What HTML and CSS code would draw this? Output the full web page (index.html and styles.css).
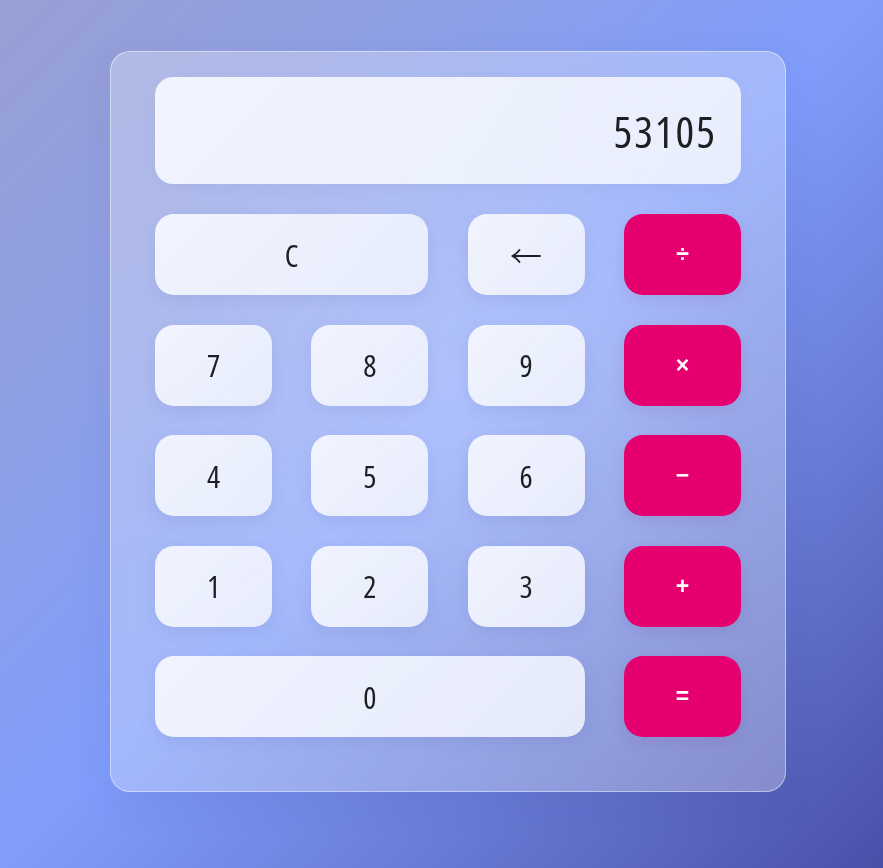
FILE: index.html
```html
<!DOCTYPE html>
<html lang="en">
<head>
<meta charset="utf-8">
<title>Calculator</title>
<link rel="stylesheet" href="styles.css">
</head>
<body>
<main class="calc">
  <div class="display">53105</div>
  <div class="keys">
    <button class="key span2">C</button>
    <button class="key arrow" aria-label="Backspace">
      <svg class="arrow-icon" width="30" height="14" viewBox="0 0 30 14" fill="none" stroke="#1f1f23" stroke-width="1.8" stroke-linecap="round" stroke-linejoin="round">
        <path d="M1.5 7 H29"/>
        <path d="M8.5 1 Q5.5 5 1.5 7 Q5.5 9 8.5 13"/>
      </svg>
    </button>
    <button class="key op">÷</button>
    <button class="key">7</button>
    <button class="key">8</button>
    <button class="key">9</button>
    <button class="key op">×</button>
    <button class="key">4</button>
    <button class="key">5</button>
    <button class="key">6</button>
    <button class="key op">−</button>
    <button class="key">1</button>
    <button class="key">2</button>
    <button class="key">3</button>
    <button class="key op">+</button>
    <button class="key span3">0</button>
    <button class="key op">=</button>
  </div>
</main>
</body>
</html>
```

FILE: styles.css
```css
* { box-sizing: border-box; }

html, body { height: 100%; }

body {
  margin: 0;
  padding: 51px 0 0 110px;
  background: linear-gradient(135deg, #989fd3 0%, #8fa0e6 25%, #809dfc 50%, #6a7ed8 72%, #4a4fa8 100%);
  font-family: "Open Sans", "DejaVu Sans Condensed", sans-serif;
  font-stretch: 75%;
  overflow: hidden;
}

.calc {
  width: 676px;
  padding: 25px 44px 54px 44px;
  border-radius: 20px;
  border: 1px solid rgba(255, 255, 255, 0.45);
  background:
    radial-gradient(circle at 50% 45%, rgba(255, 255, 255, 0.12) 0%, rgba(255, 255, 255, 0) 60%),
    rgba(255, 255, 255, 0.28);
  backdrop-filter: blur(12px);
  box-shadow: 0 10px 40px rgba(40, 40, 120, 0.08);
}

.display {
  height: 107px;
  margin-bottom: 30px;
  padding: 0 24px 0 26px;
  border-radius: 18px;
  background: linear-gradient(135deg, rgba(245, 247, 255, 0.95), rgba(238, 242, 253, 0.92));
  box-shadow: 0 4px 14px rgba(60, 70, 140, 0.06);
  display: flex;
  align-items: center;
  justify-content: flex-end;
  font-size: 44px;
  font-weight: 500;
  letter-spacing: 2px;
  color: #1f1f23;
}

.keys {
  display: grid;
  grid-template-columns: repeat(4, 1fr);
  grid-auto-rows: 81px;
  column-gap: 39.3px;
  row-gap: 29.5px;
}

.key {
  border: none;
  border-radius: 19px;
  background: linear-gradient(135deg, rgba(245, 247, 255, 0.95), rgba(236, 240, 252, 0.92));
  box-shadow: 0 5px 16px rgba(60, 70, 140, 0.10);
  font-family: inherit;
  font-stretch: inherit;
  font-size: 31px;
  font-weight: 500;
  color: #1f1f23;
  display: flex;
  align-items: center;
  justify-content: center;
  padding: 0;
  cursor: pointer;
}

.span2 { grid-column: span 2; }
.span3 { grid-column: span 3; }

.arrow-icon {
  display: block;
  margin-top: 3px;
}

.op {
  background: #e6006f;
  color: #ffffff;
  font-family: "Liberation Sans", "DejaVu Sans", sans-serif;
  font-stretch: normal;
  font-weight: 700;
  font-size: 23px;
  box-shadow: 0 5px 16px rgba(120, 20, 90, 0.10);
}
```
